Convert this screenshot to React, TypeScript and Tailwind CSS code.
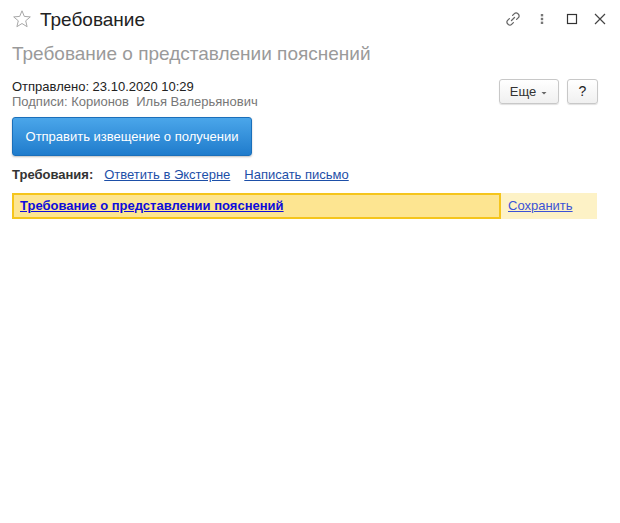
import React from "react";

export default function App() {
  return (
    <div className="w-[620px] h-[523px] bg-white" style={{ fontFamily: '"Liberation Sans", Arial, sans-serif' }}>
      {/* Header */}
      <div className="flex items-center h-[38px] pl-[12px] pr-[12px]">
        <svg width="20" height="20" viewBox="0 0 20 20" className="mr-[8px]">
          <path d="M10 1.8 L12.3 7.4 L18.3 7.9 L13.7 11.8 L15.1 17.7 L10 14.5 L4.9 17.7 L6.3 11.8 L1.7 7.9 L7.7 7.4 Z" fill="none" stroke="#a8a8a8" strokeWidth="1" strokeLinejoin="round" />
        </svg>
        <div className="text-[19px] text-[#222] leading-none">Требование</div>
        <div className="flex-1" />
        <div className="flex items-center">
          <svg width="18" height="18" viewBox="0 0 18 18" className="mr-[12px]">
            <path d="M7.5 10.5 L10.5 7.5" stroke="#666" strokeWidth="1.3" fill="none" strokeLinecap="round" />
            <path d="M8.6 5.4 L10.4 3.6 a2.4 2.4 0 0 1 3.4 0 l0.6 0.6 a2.4 2.4 0 0 1 0 3.4 L12.6 9.4" stroke="#666" strokeWidth="1.3" fill="none" strokeLinecap="round" />
            <path d="M9.4 12.6 L7.6 14.4 a2.4 2.4 0 0 1 -3.4 0 l-0.6 -0.6 a2.4 2.4 0 0 1 0 -3.4 L5.4 8.6" stroke="#666" strokeWidth="1.3" fill="none" strokeLinecap="round" />
          </svg>
          <svg width="16" height="16" viewBox="0 0 16 16" className="mr-[14px]">
            <rect x="6.8" y="3" width="2.4" height="2.4" fill="#777" />
            <rect x="6.8" y="6.8" width="2.4" height="2.4" fill="#777" />
            <rect x="6.8" y="10.6" width="2.4" height="2.4" fill="#777" />
          </svg>
          <svg width="16" height="16" viewBox="0 0 16 16" className="mr-[12px]">
            <rect x="3.5" y="3.5" width="9" height="9" fill="none" stroke="#333" strokeWidth="1.2" />
          </svg>
          <svg width="16" height="16" viewBox="0 0 16 16">
            <path d="M3 3 L13 13 M13 3 L3 13" stroke="#444" strokeWidth="1.2" />
          </svg>
        </div>
      </div>

      {/* Subtitle */}
      <div className="pl-[12px] pt-[5px] text-[19px] text-[#9a9a9a] leading-[22px]">Требование о представлении пояснений</div>

      {/* Info + buttons */}
      <div className="flex items-start pl-[12px] pr-[22px] mt-[14px]">
        <div className="flex flex-col text-[13px] leading-[15px]">
          <div className="text-[#222]">Отправлено: 23.10.2020 10:29</div>
          <div className="text-[#777]">Подписи: Корионов&nbsp; Илья Валерьянович</div>
        </div>
        <div className="flex-1" />
        <div className="flex items-center gap-[8px]">
          <div className="flex items-center justify-center w-[60px] h-[25px] border border-[#c8c8c8] rounded-[3px] bg-gradient-to-b from-white to-[#f0f0f0] shadow-[0_1px_1px_rgba(0,0,0,0.12)] text-[13px] text-[#333]">
            <span>Еще</span>
            <svg width="8" height="8" viewBox="0 0 8 8" className="ml-[4px] mt-[2px]">
              <path d="M1.5 3 L6.5 3 L4 5.5 Z" fill="#666" />
            </svg>
          </div>
          <div className="flex items-center justify-center w-[31px] h-[25px] border border-[#c8c8c8] rounded-[3px] bg-gradient-to-b from-white to-[#f0f0f0] shadow-[0_1px_1px_rgba(0,0,0,0.12)] text-[14px] text-[#222]">
            ?
          </div>
        </div>
      </div>

      {/* Blue button */}
      <div className="pl-[12px] mt-[8px]">
        <div className="flex items-center justify-center w-[240px] h-[39px] rounded-[3px] bg-gradient-to-b from-[#4aa6ea] to-[#1f7ccc] border border-[#1a6fba] text-white text-[13px] shadow-[0_1px_2px_rgba(0,0,0,0.25)]">
          Отправить извещение о получении
        </div>
      </div>

      {/* Links row */}
      <div className="flex items-center pl-[12px] mt-[11px] text-[13px] leading-[16px]">
        <span className="font-bold text-[#333]">Требования:</span>
        <a className="ml-[11px] text-[#1d4fa8] underline">Ответить в Экстерне</a>
        <a className="ml-[14px] text-[#1d4fa8] underline">Написать письмо</a>
      </div>

      {/* Yellow row */}
      <div className="flex pl-[12px] mt-[10px]">
        <div className="flex items-center w-[489px] h-[26px] bg-[#fde591] border-2 border-[#f5c51c] pl-[6px]">
          <a className="text-[13px] font-bold text-[#0d0ddb] underline">Требование о представлении пояснений</a>
        </div>
        <div className="flex items-center w-[96px] h-[26px] bg-[#fdf2c6] pl-[7px]">
          <a className="text-[13px] text-[#3b52d6] underline">Сохранить</a>
        </div>
      </div>
    </div>
  );
}
